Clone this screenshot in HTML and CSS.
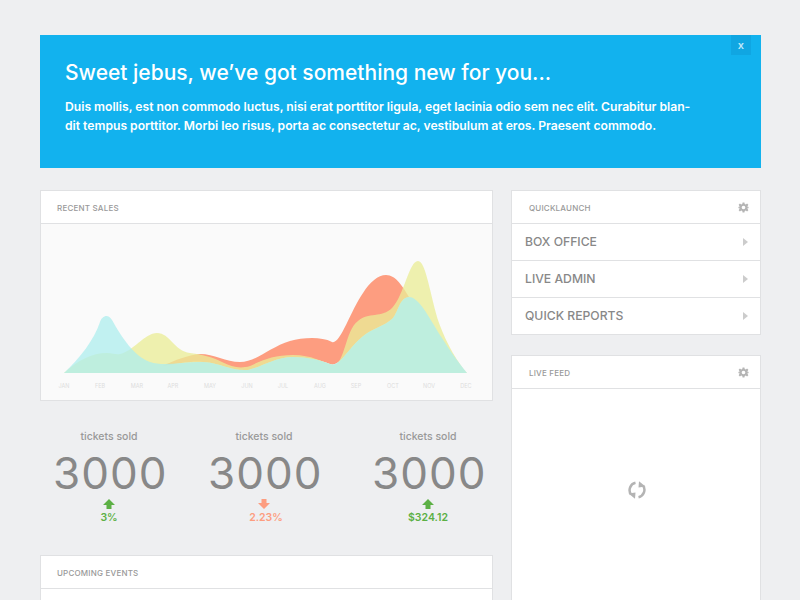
FILE: index.html
```html
<!DOCTYPE html>
<html lang="en">
<head>
    <meta charset="UTF-8">
    <title>Dashboard</title>
    <link rel="stylesheet" href="styles.css">
</head>
<body>

    <!-- Announcement -->
    <div class="banner">
        <a class="banner-close">x</a>
        <h1>Sweet jebus, we’ve got something new for you...</h1>
        <p>Duis mollis, est non commodo luctus, nisi erat porttitor ligula, eget lacinia odio sem nec elit. Curabitur blan-<br>dit tempus porttitor. Morbi leo risus, porta ac consectetur ac, vestibulum at eros. Praesent commodo.</p>
    </div>

    <div class="columns">
        <div class="main-col">
            <div class="panel">
                <div class="panel-head">Recent Sales</div>
                <svg class="chart" viewBox="41 224 451 176">
                    <path class="area-salmon" d="M163 366 C175 360 188 355 200 354 C214 354 226 362 240 362 C256 362 270 347 290 341 C302 338 320 336 332 342 C340 345 350 312 363 293 C370 282 378 275 386 275 C396 275 403 287 409 297 C400 297 398 312 393 318 C384 327 372 328 362 337 C345 352 340 367 330 364 C320 360 308 357 293 357 C275 357 262 367 248 370 C230 371 222 363 203 362 C190 361 175 364 163 366 Z"/>
                    <path class="area-yellow" d="M64 373 C78 360 92 353 107 353 C113 353 116 355 120 354 C132 352 145 333 157 333 C170 333 174 351 190 353 C205 355 212 357 222 362 C232 367 240 369 250 366 C262 360 275 355 293 355 C312 355 322 362 333 365 C345 365 345 330 358 321 C368 312 382 318 392 308 C404 296 409 261 418 261 C426 261 430 295 439 323 C447 345 458 363 467 373 Z"/>
                    <path class="area-cyan" d="M64 373 C80 358 94 340 100 322 C102 316 108 313 112 320 C122 338 134 356 150 362 C165 367 185 361 203 362 C222 363 230 371 248 370 C262 367 275 357 293 357 C308 357 320 360 330 364 C340 367 345 352 362 337 C372 328 384 327 393 318 C398 312 400 297 409 297 C420 297 431 322 442 338 C450 351 459 363 467 373 Z"/>
                    <g class="chart-months">
                        <text x="64" y="388">JAN</text>
                        <text x="100" y="388">FEB</text>
                        <text x="137" y="388">MAR</text>
                        <text x="173" y="388">APR</text>
                        <text x="210" y="388">MAY</text>
                        <text x="247" y="388">JUN</text>
                        <text x="283" y="388">JUL</text>
                        <text x="320" y="388">AUG</text>
                        <text x="356" y="388">SEP</text>
                        <text x="393" y="388">OCT</text>
                        <text x="429" y="388">NOV</text>
                        <text x="466" y="388">DEC</text>
                    </g>
                </svg>
            </div>

            <div class="stats">
                <div class="stat">
                    <div class="stat-label">tickets sold</div>
                    <div class="stat-num">3000</div>
                    <svg class="stat-arrow up" viewBox="0 0 12 10"><path d="M6 0 L12 6 H8.500 V10 H3.500 V6 H0 Z"/></svg>
                    <div class="stat-change up">3%</div>
                </div>
                <div class="stat">
                    <div class="stat-label">tickets sold</div>
                    <div class="stat-num">3000</div>
                    <svg class="stat-arrow down" viewBox="0 0 12 10"><path d="M6 10 L12 4 H8.500 V0 H3.500 V4 H0 Z"/></svg>
                    <div class="stat-change down">2.23%</div>
                </div>
                <div class="stat">
                    <div class="stat-label">tickets sold</div>
                    <div class="stat-num">3000</div>
                    <svg class="stat-arrow up" viewBox="0 0 12 10"><path d="M6 0 L12 6 H8.500 V10 H3.500 V6 H0 Z"/></svg>
                    <div class="stat-change up">$324.12</div>
                </div>
            </div>

            <div class="panel">
                <div class="panel-head">Upcoming Events</div>
                <div class="panel-empty"></div>
            </div>
        </div>

        <div class="side-col">
            <div class="panel">
                <div class="panel-head side-head">
                    Quicklaunch
                    <svg class="gear" viewBox="0 0 24 24"><path fill-rule="evenodd" d="M10 1 H14 L14.700 4.400 L16.900 5.300 L19.800 3.400 L22.600 6.200 L20.700 9.100 L21.600 11.300 L23 10 V14 L21.600 12.700 L20.700 14.900 L22.600 17.800 L19.800 20.600 L16.900 18.700 L14.700 19.600 L14 23 H10 L9.300 19.600 L7.100 18.700 L4.200 20.600 L1.400 17.800 L3.300 14.900 L2.400 12.700 L1 14 V10 L2.400 11.300 L3.300 9.100 L1.400 6.200 L4.200 3.400 L7.100 5.300 L9.300 4.400 Z M12 8 A4 4 0 1 0 12 16 A4 4 0 1 0 12 8 Z"/></svg>
                </div>
                <a class="quick-row">Box Office<span class="caret"></span></a>
                <a class="quick-row">Live Admin<span class="caret"></span></a>
                <a class="quick-row">Quick Reports<span class="caret"></span></a>
            </div>

            <div class="panel">
                <div class="panel-head side-head">
                    Live Feed
                    <svg class="gear" viewBox="0 0 24 24"><path fill-rule="evenodd" d="M10 1 H14 L14.700 4.400 L16.900 5.300 L19.800 3.400 L22.600 6.200 L20.700 9.100 L21.600 11.300 L23 10 V14 L21.600 12.700 L20.700 14.900 L22.600 17.800 L19.800 20.600 L16.900 18.700 L14.700 19.600 L14 23 H10 L9.300 19.600 L7.100 18.700 L4.200 20.600 L1.400 17.800 L3.300 14.900 L2.400 12.700 L1 14 V10 L2.400 11.300 L3.300 9.100 L1.400 6.200 L4.200 3.400 L7.100 5.300 L9.300 4.400 Z M12 8 A4 4 0 1 0 12 16 A4 4 0 1 0 12 8 Z"/></svg>
                </div>
                <div class="feed-body">
                    <svg class="spinner" viewBox="0 0 18 18">
                        <path d="M7.500 1.800 A7.500 7.500 0 0 0 3 13.500" />
                        <path d="M10.500 16.200 A7.500 7.500 0 0 0 15 4.500" />
                        <polygon points="0.500,12.500 7.500,11.500 7,17.800" />
                        <polygon points="17.500,5.500 10.500,6.500 11,0.200" />
                    </svg>
                </div>
            </div>
        </div>
    </div>

</body>
</html>
```

FILE: styles.css
```css
html {
    height: 600px;
    overflow: hidden;
}

body {
    background: #eeeff1;
    color: #888;
    font-family: 'Inter', 'Liberation Sans', sans-serif;
    margin: 0;
    padding: 35px 39px 0 40px;
}

.banner {
    position: relative;
    background: #12b2ee;
    color: white;
    height: 133px;
    padding: 26px 25px 0;
    box-sizing: border-box;
}

.banner h1 {
    font-size: 21px;
    font-weight: 500;
    line-height: 24px;
    margin: 0 0 12px;
}

.banner p {
    font-size: 12.150px;
    font-weight: 600;
    line-height: 19px;
    margin: 0;
}

.banner-close {
    position: absolute;
    top: 0;
    right: 10px;
    width: 20px;
    height: 20px;
    background: #10a6e2;
    color: #bfe8fa;
    font-size: 11px;
    font-weight: 600;
    line-height: 20px;
    text-align: center;
}

.columns {
    display: flex;
    gap: 18px;
    margin-top: 22px;
}

.main-col {
    width: 453px;
}

.side-col {
    width: 250px;
}

.side-col .panel + .panel {
    margin-top: 20px;
}

.panel {
    background: white;
    border: 1px solid #e0e1e3;
}

.panel-head {
    display: flex;
    justify-content: space-between;
    align-items: center;
    height: 30px;
    padding: 2px 16px 0;
    border-bottom: 1px solid #e0e1e3;
    color: #999;
    font-size: 8px;
    font-weight: 500;
    letter-spacing: 0.2px;
    text-transform: uppercase;
}

.side-head {
    padding: 2px 11px 0 17px;
}

.gear {
    width: 11px;
    height: 11px;
    margin-top: -1px;
    fill: #b5b5b5;
}

/* Chart */
.chart {
    display: block;
    width: 451px;
    height: 176px;
    background: #fafafa;
}

.area-salmon {
    fill: #fd9d80;
}

.area-yellow {
    fill: #eaed97;
    opacity: 0.77;
}

.area-cyan {
    fill: #adeded;
    opacity: 0.75;
}

.chart-months text {
    fill: #ddd;
    font-size: 5.500px;
    text-anchor: middle;
}

/* Stats row */
.stats {
    display: grid;
    grid-template-columns: 155px 164px 112px;
    height: 154px;
    padding-left: 13px;
}

.stat {
    width: 112px;
    text-align: center;
}

.stat-label {
    font-size: 10.500px;
    font-weight: 500;
    color: #999;
    line-height: 14px;
    margin-top: 29px;
}

.stat-num {
    font-size: 44px;
    font-weight: 400;
    letter-spacing: 1px;
    line-height: 48px;
    margin-top: 5px;
    color: #888;
}

.stat-arrow {
    display: block;
    width: 12px;
    height: 10px;
    margin: 2px auto 0;
}

.stat-arrow.up {
    fill: #5cb045;
}

.stat-arrow.down {
    fill: #fd9d80;
}

.stat-change {
    margin-top: 1px;
    font-size: 10.500px;
    font-weight: 600;
    line-height: 16px;
}

.stat-change.up {
    color: #5cb045;
}

.stat-change.down {
    color: #fd9d80;
    padding-left: 4px;
}

.panel-empty {
    height: 100px;
}

/* Quicklaunch */
.quick-row {
    display: flex;
    justify-content: space-between;
    align-items: center;
    height: 34px;
    padding: 0 12px 2px 13px;
    border-bottom: 1px solid #e0e1e3;
    font-size: 12.200px;
    font-weight: 500;
    color: #888;
    text-transform: uppercase;
}

.quick-row:last-child {
    border-bottom: none;
}

.caret {
    width: 0;
    height: 0;
    margin-top: 1px;
    border-left: 5px solid #ccc;
    border-top: 4.500px solid transparent;
    border-bottom: 4.500px solid transparent;
}

/* Live feed */
.feed-body {
    display: flex;
    justify-content: center;
    height: 300px;
    padding: 92px 0 0 2px;
    box-sizing: border-box;
}

.spinner {
    width: 18px;
    height: 18px;
}

.spinner path {
    fill: none;
    stroke: #b4b4b4;
    stroke-width: 2.500;
}

.spinner polygon {
    fill: #b4b4b4;
}
```
